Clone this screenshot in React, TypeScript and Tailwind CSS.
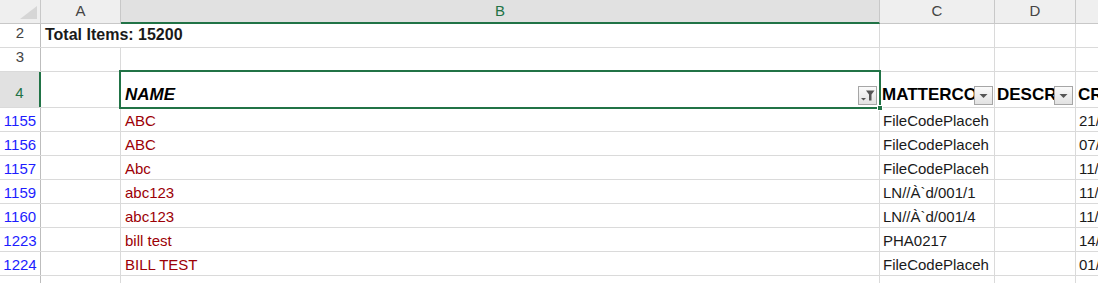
import React from 'react';

interface DataRow {
  num: string;
  name: string;
  code: string;
  created: string;
}

const rows: DataRow[] = [
  { num: '1155', name: 'ABC', code: 'FileCodePlaceh', created: '21/' },
  { num: '1156', name: 'ABC', code: 'FileCodePlaceh', created: '07/' },
  { num: '1157', name: 'Abc', code: 'FileCodePlaceh', created: '11/' },
  { num: '1159', name: 'abc123', code: 'LN//À`d/001/1', created: '11/' },
  { num: '1160', name: 'abc123', code: 'LN//À`d/001/4', created: '11/' },
  { num: '1223', name: 'bill test', code: 'PHA0217', created: '14/' },
  { num: '1224', name: 'BILL TEST', code: 'FileCodePlaceh', created: '01/' },
  { num: '1225', name: '', code: 'mattl/ld/d', created: '01/' },
];

// small dropdown arrow button used by the autofilter header
const FilterButton: React.FC<{ active?: boolean }> = ({ active }) => (
  <div className="shrink-0 w-[19px] h-[19px] mb-[2px] border border-[#a6a6a6] bg-gradient-to-b from-[#fbfbfb] to-[#e2e2e2] flex items-center justify-center">
    {active ? (
      <svg width="17" height="17" viewBox="0 0 17 17">
        <path d="M2 11 L7 11 L4.5 13.5 Z" fill="#555" />
        <path d="M7 3.5 L15.5 3.5 L12.5 7.5 L12.5 13.5 L10 13.5 L10 7.5 Z" fill="#555" />
      </svg>
    ) : (
      <svg width="17" height="17" viewBox="0 0 17 17">
        <path d="M4.5 7 L12.5 7 L8.5 11 Z" fill="#555" />
      </svg>
    )}
  </div>
);

const App: React.FC = () => {
  return (
    <div className="relative w-[1098px] h-[283px] overflow-hidden bg-white font-['Liberation_Sans',Arial,sans-serif] text-[15px] text-[#1a1a1a]">
      {/* Column headers */}
      <div className="flex h-[24px]">
        <div className="w-[41px] shrink-0 bg-[#efefef] border-r border-b border-[#c8c8c8] flex items-end justify-end pr-[3px] pb-[4px]">
          <svg width="17" height="13" viewBox="0 0 17 13">
            <path d="M17 0 L17 13 L0 13 Z" fill="#d6d6d6" />
          </svg>
        </div>
        <div className="w-[80px] shrink-0 bg-[#efefef] border-r border-b border-[#c8c8c8] flex items-center justify-center text-[#444]">A</div>
        <div className="w-[759px] shrink-0 bg-[#e1e1e1] border-r border-[#c8c8c8] border-b-2 border-b-[#217346] flex items-center justify-center text-[#217346]">B</div>
        <div className="w-[115px] shrink-0 bg-[#efefef] border-r border-b border-[#c8c8c8] flex items-center justify-center text-[#444]">C</div>
        <div className="w-[81px] shrink-0 bg-[#efefef] border-r border-b border-[#c8c8c8] flex items-center justify-center text-[#444]">D</div>
        <div className="flex-1 bg-[#efefef] border-b border-[#c8c8c8]" />
      </div>

      {/* Row 2 */}
      <div className="flex h-[24px] border-b border-[#dadada]">
        <div className="w-[41px] shrink-0 border-r border-[#bdbdbd] flex items-end justify-center pb-[3px] text-[#444]">2</div>
        <div className="w-[839px] shrink-0 border-r border-[#dadada] flex items-end pl-[4px] pb-[4px] text-[16px] font-bold leading-[17px] whitespace-nowrap">
          Total Items: 15200
        </div>
        <div className="w-[115px] shrink-0 border-r border-[#dadada]" />
        <div className="w-[81px] shrink-0 border-r border-[#dadada]" />
        <div className="flex-1" />
      </div>

      {/* Row 3 */}
      <div className="flex h-[24px] border-b border-[#dadada]">
        <div className="w-[41px] shrink-0 border-r border-[#bdbdbd] flex items-end justify-center pb-[3px] text-[#444]">3</div>
        <div className="w-[80px] shrink-0 border-r border-[#dadada]" />
        <div className="w-[759px] shrink-0 border-r border-[#dadada]" />
        <div className="w-[115px] shrink-0 border-r border-[#dadada]" />
        <div className="w-[81px] shrink-0 border-r border-[#dadada]" />
        <div className="flex-1" />
      </div>

      {/* Row 4 - table header with filters */}
      <div className="flex h-[36px] border-b border-[#dadada]">
        <div className="w-[41px] shrink-0 bg-[#e1e1e1] border-r-2 border-[#217346] flex items-end justify-center pb-[3px] text-[#217346]">4</div>
        <div className="w-[80px] shrink-0 border-r border-[#dadada]" />
        <div className="w-[759px] shrink-0 border-r border-[#dadada] flex items-end pl-[4px] pr-[2px]">
          <span className="flex-1 pb-[2px] text-[17px] leading-[20px] font-bold italic text-black">NAME</span>
          <FilterButton active />
        </div>
        <div className="w-[115px] shrink-0 border-r border-[#dadada] flex items-end pl-[2px] pr-[1px]">
          <span className="flex-1 overflow-hidden whitespace-nowrap pb-[2px] text-[17px] leading-[20px] font-bold text-black">MATTERCODE</span>
          <FilterButton />
        </div>
        <div className="w-[81px] shrink-0 border-r border-[#dadada] flex items-end pl-[2px] pr-[2px]">
          <span className="flex-1 overflow-hidden whitespace-nowrap pb-[2px] text-[17px] leading-[20px] font-bold text-black">DESCRIPTION</span>
          <FilterButton />
        </div>
        <div className="flex-1 flex items-end pl-[2px] overflow-hidden">
          <span className="whitespace-nowrap pb-[2px] text-[17px] leading-[20px] font-bold text-black">CREATED</span>
        </div>
      </div>

      {/* Filtered data rows */}
      {rows.map((row) => (
        <div key={row.num} className="flex h-[24px] border-b border-[#dadada]">
          <div className="w-[41px] shrink-0 border-r border-[#bdbdbd] flex items-end justify-center pb-[2px] leading-[17px] text-[#1d1dff]">{row.num}</div>
          <div className="w-[80px] shrink-0 border-r border-[#dadada]" />
          <div className="w-[759px] shrink-0 border-r border-[#dadada] flex items-end pl-[4px] pb-[2px] leading-[17px] text-[#9c0006]">{row.name}</div>
          <div className="w-[115px] shrink-0 border-r border-[#dadada] flex items-end pl-[3px] pb-[2px] leading-[17px] overflow-hidden whitespace-nowrap">{row.code}</div>
          <div className="w-[81px] shrink-0 border-r border-[#dadada]" />
          <div className="flex-1 flex items-end pl-[3px] pb-[2px] leading-[17px] whitespace-nowrap">{row.created}</div>
        </div>
      ))}

      {/* Active cell selection B4 */}
      <div className="absolute left-[119px] top-[70px] w-[762px] h-[39px] border-2 border-[#217346] pointer-events-none" />
      <div className="absolute left-[877px] top-[105px] w-[6px] h-[6px] bg-[#217346] border border-white" />
    </div>
  );
};

export default App;
